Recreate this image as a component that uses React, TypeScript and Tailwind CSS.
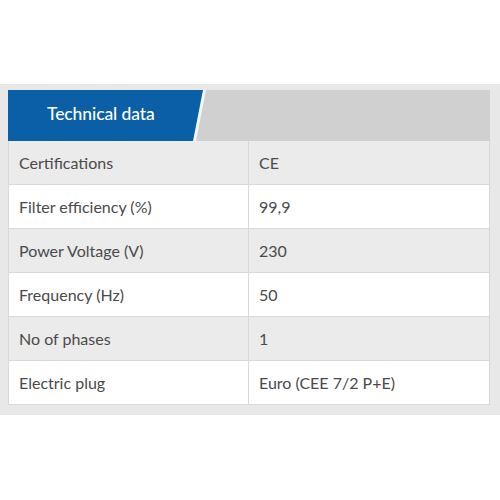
import React from "react";

const rows: [string, string][] = [
  ["Certifications", "CE"],
  ["Filter efficiency (%)", "99,9"],
  ["Power Voltage (V)", "230"],
  ["Frequency (Hz)", "50"],
  ["No of phases", "1"],
  ["Electric plug", "Euro (CEE 7/2 P+E)"],
];

export default function App() {
  return (
    <div className="w-[500px] h-[500px] bg-white pt-[84px]" style={{ fontFamily: "Lato, 'Open Sans', sans-serif" }}>
      <div className="bg-[#e8e8e8] pl-[8px] pr-[10px] pt-[6px] pb-[10px]">
        <div className="bg-white">
          <div className="h-[51px] bg-[#d0d0d0] flex">
            <div className="w-[198px] h-full bg-[#f4f6f8] [clip-path:polygon(0_0,100%_0,calc(100%-10px)_100%,0_100%)]">
              <div className="w-[195px] h-full bg-[#0a5fa6] [clip-path:polygon(0_0,100%_0,calc(100%-10px)_100%,0_100%)] flex items-center pl-[39px] pb-[3px]">
                <span className="text-white text-[17.5px] font-medium tracking-[-0.1px]">Technical data</span>
              </div>
            </div>
          </div>
          {rows.map(([k, v], i) => (
            <div
              key={k}
              className={`grid grid-cols-[240px_1fr] h-[44px] border-b border-[#d8d8d8] border-x ${i % 2 === 0 ? "bg-[#ebebeb]" : "bg-white"}`}
            >
              <div className="flex items-center pl-[10px] border-r border-[#d8d8d8] text-[16px] text-[#4a4a4a]">{k}</div>
              <div className="flex items-center pl-[10px] text-[16px] text-[#4a4a4a]">{v}</div>
            </div>
          ))}
        </div>
      </div>
    </div>
  );
}
